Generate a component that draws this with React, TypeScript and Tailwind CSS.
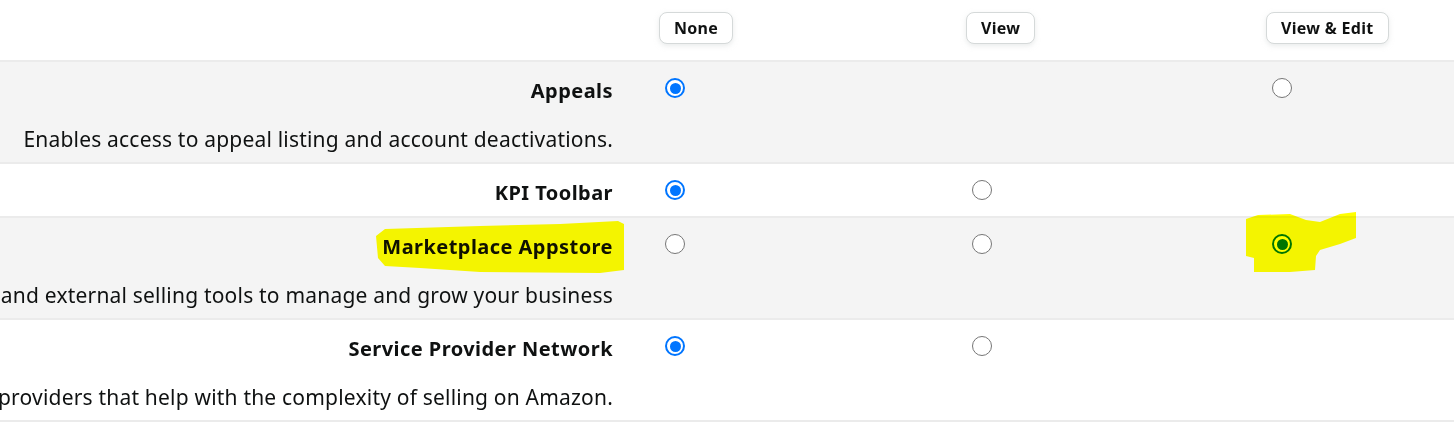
import React from "react";

type Level = "none" | "view" | "edit";

type Permission = {
  title: string;
  description?: string;
  levels: Level[];
  selected: Level;
  shaded: boolean;
};

const permissions: Permission[] = [
  {
    title: "Appeals",
    description: "Enables access to appeal listing and account deactivations.",
    levels: ["none", "edit"],
    selected: "none",
    shaded: true,
  },
  {
    title: "KPI Toolbar",
    levels: ["none", "view"],
    selected: "none",
    shaded: false,
  },
  {
    title: "Marketplace Appstore",
    description:
      "Enables access to discover Amazon and external selling tools to manage and grow your business",
    levels: ["none", "view", "edit"],
    selected: "edit",
    shaded: true,
  },
  {
    title: "Service Provider Network",
    description:
      "Connects you with third-party service providers that help with the complexity of selling on Amazon.",
    levels: ["none", "view"],
    selected: "none",
    shaded: false,
  },
];

const columns: Level[] = ["none", "view", "edit"];

function Radio({ checked }: { checked: boolean }) {
  if (checked) {
    return (
      <span className="flex h-[20px] w-[20px] items-center justify-center rounded-full border-2 border-[#0075ff] bg-white">
        <span className="h-[11px] w-[11px] rounded-full bg-[#0075ff]" />
      </span>
    );
  }
  return <span className="block h-[20px] w-[20px] rounded-full border-[1.5px] border-[#767676] bg-white" />;
}

function HeaderButton({ label }: { label: string }) {
  return (
    <button className="h-[32px] rounded-[8px] border border-[#d5d9d9] bg-white px-[14px] text-[16px] font-bold tracking-[0.3px] text-[#0f1111] shadow-[0_2px_5px_rgba(213,217,217,0.5)]">
      {label}
    </button>
  );
}

function Row({ p }: { p: Permission }) {
  return (
    <div
      className={`grid grid-cols-[659px_307px_300px_1fr] border-b-2 border-[#ebebeb] ${
        p.shaded ? "bg-[#f4f4f4]" : "bg-white"
      }`}
    >
      <div className="overflow-hidden pr-[46px] pt-[15px] pb-[9px]">
        <div className="flex justify-end">
          <span className="whitespace-nowrap text-[20px] font-bold leading-[28px] tracking-[0.45px] text-[#0f1111]">
            {p.title}
          </span>
        </div>
        {p.description && (
          <div className="mt-[20px] flex justify-end">
            <span className="whitespace-nowrap text-[21px] leading-[28px] tracking-[0.2px] text-[#0f1111]">
              {p.description}
            </span>
          </div>
        )}
      </div>
      {columns.map((c) => (
        <div key={c} className="pl-[6px] pt-[16px]">
          {p.levels.includes(c) && <Radio checked={p.selected === c} />}
        </div>
      ))}
    </div>
  );
}

export default function App() {
  return (
    <div className="relative h-[424px] w-[1454px] overflow-hidden bg-white font-['Noto_Sans',sans-serif]">
      <div className="grid grid-cols-[659px_307px_300px_1fr] border-b-2 border-[#ebebeb] pt-[12px] pb-[16px]">
        <div />
        <div>
          <HeaderButton label="None" />
        </div>
        <div>
          <HeaderButton label="View" />
        </div>
        <div>
          <HeaderButton label="View & Edit" />
        </div>
      </div>
      {permissions.map((p) => (
        <Row key={p.title} p={p} />
      ))}

      {/* marker strokes drawn over the table */}
      <svg
        className="pointer-events-none absolute left-0 top-0 mix-blend-multiply"
        width="1454"
        height="424"
        viewBox="0 0 1454 424"
      >
        <polygon
          fill="#ffff00"
          points="376,236 385,229 480,226 560,224 618,221 624,224 624,270 600,273 480,272 420,268 385,266 378,258"
        />
        <polygon
          fill="#ffff00"
          points="1246,219 1258,215 1290,214 1306,220 1320,222 1340,214 1356,212 1356,238 1340,244 1320,250 1316,256 1315,270 1290,272 1254,272 1254,258 1246,256"
        />
      </svg>
    </div>
  );
}
